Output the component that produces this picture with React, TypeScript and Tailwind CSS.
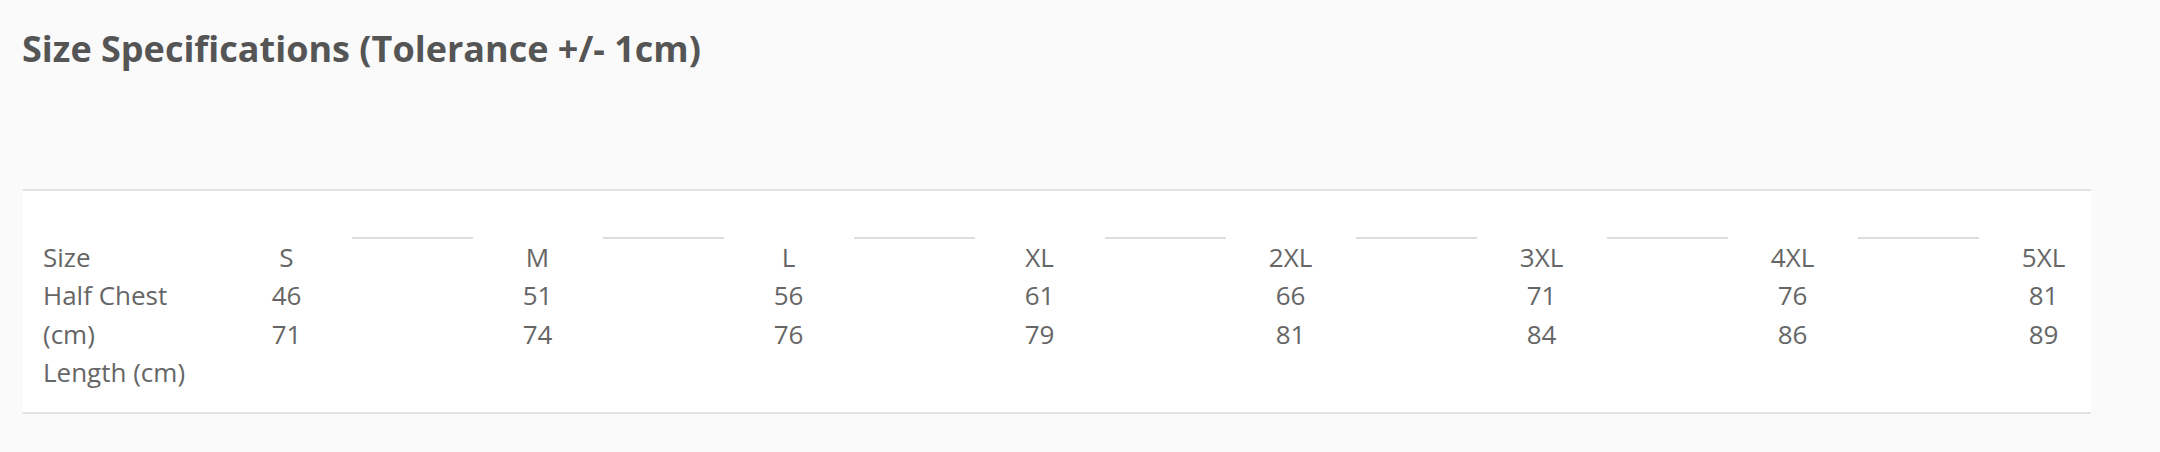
const sizes = [
  { size: 'S', chest: 46, length: 71 },
  { size: 'M', chest: 51, length: 74 },
  { size: 'L', chest: 56, length: 76 },
  { size: 'XL', chest: 61, length: 79 },
  { size: '2XL', chest: 66, length: 81 },
  { size: '3XL', chest: 71, length: 84 },
  { size: '4XL', chest: 76, length: 86 },
  { size: '5XL', chest: 81, length: 89 },
];

export default function App() {
  return (
    <div className="w-[2160px] h-[452px] bg-[#fafafa] font-['Open_Sans',sans-serif]">
      <h2 className="pl-[22px] pt-[31px] text-[36px] leading-[36px] font-bold text-[#555555]">
        Size Specifications (Tolerance +/- 1cm)
      </h2>

      {/* Size chart */}
      <div className="ml-[23px] mt-[122px] w-[2068px] bg-white border-y-2 border-[#e2e2e2] flex items-start pt-[47px] pb-[20px] pl-[20px] text-[26px] leading-[38.4px] text-[#666666]">
        <div className="w-[160px] mr-[38.5px] shrink-0">
          <div>Size</div>
          <div>Half Chest (cm)</div>
          <div>Length (cm)</div>
        </div>

        {sizes.map((s, i) => (
          <div key={s.size} className="flex items-start">
            {i > 0 && (
              <div className="w-[161px] flex justify-center">
                <div className="w-[121px] h-[2px] -mt-[1px] bg-[#dddddd]" />
              </div>
            )}
            <div className="w-[90px] text-center">
              <div>{s.size}</div>
              <div>{s.chest}</div>
              <div>{s.length}</div>
            </div>
          </div>
        ))}
      </div>
    </div>
  );
}
